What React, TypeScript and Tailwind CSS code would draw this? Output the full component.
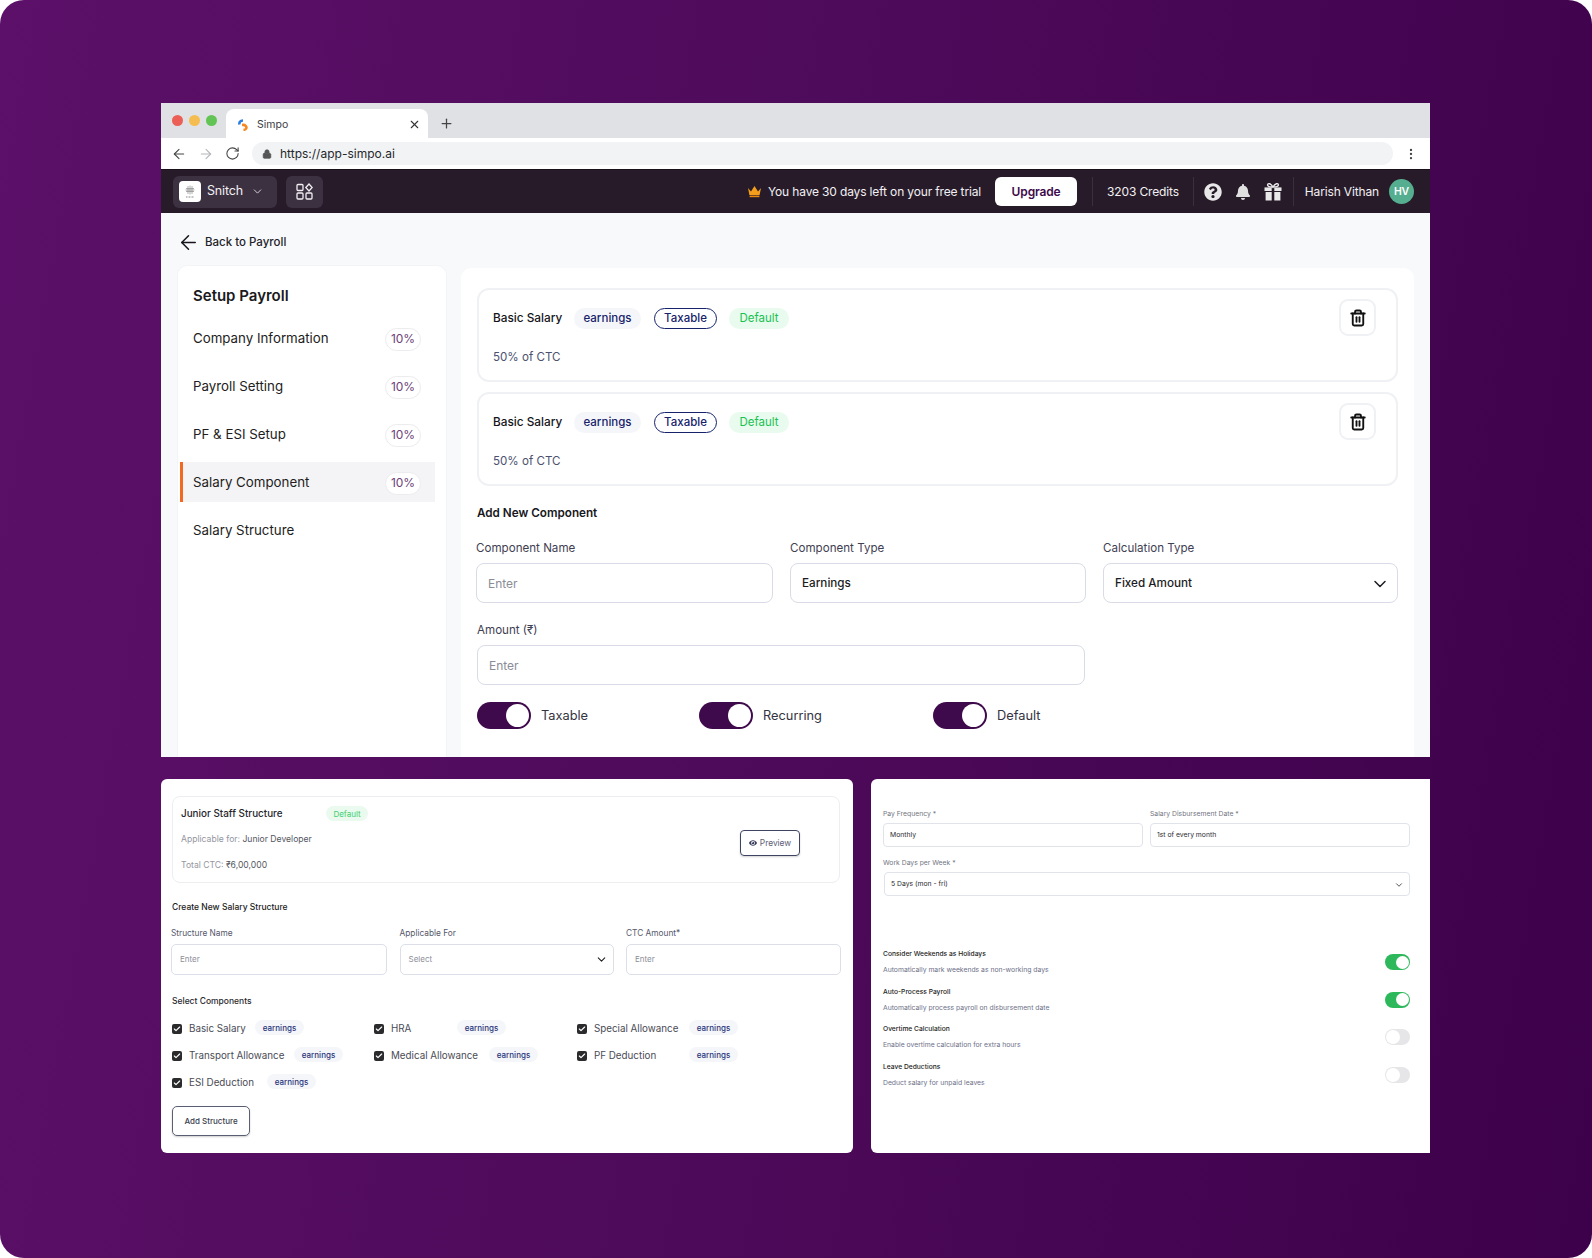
import React from "react";
import { ArrowLeft, ArrowRight, RotateCw, Lock, X, Plus, ChevronDown, Trash2, Check, MoreVertical } from "lucide-react";
import { FaBell, FaQuestionCircle, FaEye } from "react-icons/fa";

function Crown() {
  return (
    <svg width="15" height="13" viewBox="0 0 15 13">
      <path d="M1 3 L4 6.5 L7.5 1 L11 6.5 L14 3 L12.6 10 H2.4 Z" fill="#f59e1b" />
      <rect x="2.6" y="10.6" width="9.8" height="1.6" fill="#e8890c" />
    </svg>
  );
}

function GiftIcon() {
  return (
    <svg width="18" height="19" viewBox="0 0 18 19" className="ml-[13px]">
      <path d="M9 5 C7 1.2 3.6 0.8 3.6 3 C3.6 4.6 6.5 5 9 5 C11.5 5 14.4 4.6 14.4 3 C14.4 0.8 11 1.2 9 5 Z" fill="none" stroke="#e8e8e8" strokeWidth="1.4" />
      <rect x="0.5" y="5.4" width="7.2" height="3.6" fill="#e8e8e8" />
      <rect x="10.3" y="5.4" width="7.2" height="3.6" fill="#e8e8e8" />
      <rect x="1.6" y="10" width="6.1" height="8.5" fill="#e8e8e8" />
      <rect x="10.3" y="10" width="6.1" height="8.5" fill="#e8e8e8" />
    </svg>
  );
}

function AppsIcon() {
  return (
    <svg width="17" height="17" viewBox="0 0 17 17" fill="none" stroke="#f1eff2" strokeWidth="1.3">
      <rect x="1" y="1.5" width="6" height="6" rx="1" />
      <rect x="1" y="10" width="6" height="6" rx="1" />
      <rect x="10" y="10" width="6" height="6" rx="1" />
      <path d="M13 1 L16.2 4.5 L13 8 L9.8 4.5 Z" />
    </svg>
  );
}

function Favicon() {
  return (
    <svg width="10" height="12" viewBox="0 0 10 12" fill="none" strokeWidth="2.6">
      <path d="M5 1.5 C2 1.5 1 3.5 1.5 5.5" stroke="#2a7de1" />
      <path d="M4 6 C7.5 5.5 9 7.5 8.2 9.5 C7.6 10.6 6.5 10.8 5.5 10.8" stroke="#f5881f" />
    </svg>
  );
}

function SnitchMark() {
  return (
    <svg width="12" height="14" viewBox="0 0 12 14" fill="none" stroke="#8a8a8a" strokeWidth="0.7">
      <path d="M4 1 V9 M6 0.5 V9.5 M8 1 V9 M2 3.5 H10 M1.5 5 H10.5 M2 6.5 H10" />
      <path d="M2 12 H10" strokeWidth="1.2" strokeDasharray="1 0.5" />
    </svg>
  );
}

function Pill({ children }: { children: React.ReactNode }) {
  return (
    <span className="mt-[2px] flex h-[23px] w-[36px] items-center justify-center rounded-full border border-[#ececef] bg-white text-[12px] text-[#6d3f78]">
      {children}
    </span>
  );
}

function NavItem({ label, pct, active }: { label: string; pct?: boolean; active?: boolean }) {
  return (
    <div
      className={
        active
          ? "flex h-[40px] items-center justify-between border-l-[3px] border-[#f26a21] bg-[#f4f3f5] pl-[10px] pr-[14px] text-[13.3px] text-[#1d1d22]"
          : "flex h-[40px] items-center justify-between border-l-[3px] border-transparent pl-[10px] pr-[14px] text-[13.3px] text-[#1d1d22]"
      }
    >
      <span className="pt-px">{label}</span>
      {pct && <Pill>10%</Pill>}
    </div>
  );
}

function ComponentCard() {
  return (
    <div className="flex h-[94px] justify-between rounded-[12px] border-2 border-[#f0f1f4] pl-[14px] pr-[20px]">
      <div className="pt-[18px]">
        <div className="flex h-[21px] items-center text-[11.5px]">
          <span className="w-[81px] whitespace-nowrap text-[11.8px] font-medium text-[#15151a]">Basic Salary</span>
          <span className="flex h-[21px] w-[67px] items-center justify-center rounded-full bg-[#f5f6f9] font-medium text-[#16236b]">earnings</span>
          <span className="ml-[13px] flex h-[21px] w-[63px] items-center justify-center rounded-full border-[1.5px] border-[#16236b] font-medium text-[#16236b]">Taxable</span>
          <span className="ml-[12px] flex h-[21px] w-[60px] items-center justify-center rounded-full bg-[#e9faee] text-[#18c252]">Default</span>
        </div>
        <div className="mt-[18px] text-[11.6px] leading-[20px] text-[#4c5170]">50% of CTC</div>
      </div>
      <div className="mt-[9px] flex h-[37px] w-[37px] items-center justify-center rounded-[9px] border-2 border-[#f0f1f4]">
        <Trash2 size={18} strokeWidth={2.5} color="#111" />
      </div>
    </div>
  );
}

function Field({ label, value, placeholder, chevron }: { label: string; value?: string; placeholder?: string; chevron?: boolean }) {
  return (
    <div>
      <div className="h-[20px] text-[11.6px] leading-[21px] text-[#3f4152]">{label}</div>
      <div className="mt-[5px] flex h-[40px] items-center justify-between rounded-[8px] border-[1.5px] border-[#d9dce6] pl-[11px] pr-[7px] pt-px text-[12px]">
        {value ? <span className="text-[11.7px] font-medium text-[#1c1c22]">{value}</span> : <span className="text-[#8a8c97]">{placeholder}</span>}
        {chevron && <ChevronDown size={20} strokeWidth={1.8} color="#1c1c22" />}
      </div>
    </div>
  );
}

function BigToggle({ label, className }: { label: string; className: string }) {
  return (
    <div className={className}>
      <div className="flex h-[27px] w-[54px] items-center justify-end rounded-full bg-[#3e0a4b] pr-[2px]">
        <div className="h-[23px] w-[23px] rounded-full bg-white" />
      </div>
      <span className="text-[12.8px] text-[#33343f]">{label}</span>
    </div>
  );
}

function Earnings({ className }: { className: string }) {
  return <span className={className}>earnings</span>;
}

const checks = [
  { label: "Basic Salary", w: "w-[66px]" },
  { label: "HRA", w: "w-[66px]" },
  { label: "Special Allowance", w: "w-[95px]" },
  { label: "Transport Allowance", w: "w-[105px]" },
  { label: "Medical Allowance", w: "w-[98px]" },
  { label: "PF Deduction", w: "w-[95px]" },
  { label: "ESI Deduction", w: "w-[78px]" },
];

function MiniField({ label, placeholder, chevron }: { label: string; placeholder: string; chevron?: boolean }) {
  return (
    <div>
      <div className="h-[10px] text-[8.3px] leading-[11px] text-[#55586a]">{label}</div>
      <div className="mt-[6px] flex h-[31px] items-center justify-between rounded-[5px] border border-[#dcdfe8] pb-px pl-[8px] pr-[5px] text-[8px] text-[#8d8f9a]">
        <span>{placeholder}</span>
        {chevron && <ChevronDown size={13} strokeWidth={2} color="#222" />}
      </div>
    </div>
  );
}

function SmallToggle({ on }: { on?: boolean }) {
  return on ? (
    <div className="mt-[5px] flex h-[16px] w-[25px] items-center justify-end rounded-full bg-[#2eb85c] pr-px">
      <div className="h-[13px] w-[13px] rounded-full bg-white" />
    </div>
  ) : (
    <div className="mt-[5px] flex h-[16px] w-[25px] items-center rounded-full bg-[#e6e6e8] pl-px">
      <div className="h-[14px] w-[14px] rounded-full bg-white" />
    </div>
  );
}

const settings = [
  { t: "Consider Weekends as Holidays", s: "Automatically mark weekends as non-working days", on: true },
  { t: "Auto-Process Payroll", s: "Automatically process payroll on disbursement date", on: true },
  { t: "Overtime Calculation", s: "Enable overtime calculation for extra hours", on: false },
  { t: "Leave Deductions", s: "Deduct salary for unpaid leaves", on: false },
];

export default function App() {
  return (
    <div className="h-[1258px] w-[1592px] overflow-hidden bg-white font-['Inter',sans-serif]">
      <div className="flex h-full w-full flex-col rounded-[24px] bg-[linear-gradient(100deg,#5c1069_0%,#4d0a5a_50%,#3d004a_100%)] pl-[161px] pt-[103px]">
        {/* Window */}
        <div className="flex h-[654px] w-[1269px] flex-col overflow-hidden">
          <div className="flex h-[35px] shrink-0 items-center bg-[#dfe1e5] pl-[11px]">
            <div className="flex gap-[6px]">
              <span className="h-[11px] w-[11px] rounded-full bg-[#ec5f57]" />
              <span className="h-[11px] w-[11px] rounded-full bg-[#f5bd4f]" />
              <span className="h-[11px] w-[11px] rounded-full bg-[#62c454]" />
            </div>
            <div className="ml-[9px] flex h-[29px] w-[202px] items-center self-end rounded-t-[8px] bg-white pl-[12px] pr-[7px] pt-[2px]">
              <Favicon />
              <span className="ml-[9px] text-[10.5px] text-[#3c4043]">Simpo</span>
              <X size={13} strokeWidth={2} color="#333" className="ml-auto" />
            </div>
            <Plus size={15} strokeWidth={2} color="#444" className="ml-[11px] mt-[6px]" />
          </div>
          <div className="flex h-[31px] shrink-0 items-center bg-white pl-[10px]">
            <ArrowLeft size={16} strokeWidth={1.6} color="#444" />
            <ArrowRight size={16} strokeWidth={1.6} color="#b4b6ba" className="ml-[11px]" />
            <RotateCw size={15} strokeWidth={1.7} color="#444" className="ml-[11px]" />
            <div className="ml-[12px] flex h-[23px] flex-1 items-center rounded-full bg-[#f1f3f4] pl-[10px]">
              <Lock size={10} fill="#555" color="#555" strokeWidth={2} />
              <span className="ml-[8px] text-[12px] text-[#26282c]">https://app-simpo.ai</span>
            </div>
            <MoreVertical size={14} strokeWidth={2} color="#444" className="ml-[11px] mr-[12px]" />
          </div>
          <div className="flex h-[44px] shrink-0 items-center border-t border-[#1a111b] bg-[#271b29] pl-[12px] pr-[16px] text-[12px] tracking-[-0.15px] text-[#f2f0f3]">
            <div className="flex h-[32px] w-[104px] items-center rounded-[6px] bg-[#3c3140] pl-[6px]">
              <div className="flex h-[21px] w-[22px] items-center justify-center rounded-[4px] bg-white">
                <SnitchMark />
              </div>
              <span className="ml-[6px] text-[12.5px]">Snitch</span>
              <ChevronDown size={13} strokeWidth={1.6} color="#e8e6ea" className="ml-[8px]" />
            </div>
            <div className="ml-[9px] flex h-[32px] w-[37px] items-center justify-center rounded-[6px] bg-[#3c3140]">
              <AppsIcon />
            </div>
            <div className="ml-auto flex items-center">
              <Crown />
              <span className="ml-[6px] whitespace-nowrap">You have 30 days left on your free trial</span>
              <div className="ml-[14px] flex h-[29px] w-[82px] items-center justify-center rounded-[6px] bg-white font-semibold text-[#3e0a4b]">Upgrade</div>
              <div className="ml-[15px] h-[29px] w-px bg-[#3a2f3c]" />
              <span className="ml-[14px] whitespace-nowrap">3203 Credits</span>
              <div className="ml-[14px] h-[29px] w-px bg-[#3a2f3c]" />
              <FaQuestionCircle size={18} color="#e8e8e8" className="ml-[10px]" />
              <FaBell size={16} color="#e0e0e0" className="ml-[13px]" />
              <GiftIcon />
              <div className="ml-[11px] h-[29px] w-px bg-[#3a2f3c]" />
              <span className="ml-[11px] whitespace-nowrap">Harish Vithan</span>
              <div className="ml-[10px] flex h-[25px] w-[25px] items-center justify-center rounded-full bg-[#55ae8f] text-[10.5px] font-semibold text-white">HV</div>
            </div>
          </div>
          <div className="flex min-h-0 flex-1 flex-col bg-[#f8f9fb] pl-[16px] pr-[16px]">
            <div className="mt-[19px] flex h-[20px] shrink-0 items-center text-[11.5px] font-medium text-[#23232a]">
              <ArrowLeft size={23} strokeWidth={1.6} color="#16161c" />
              <span className="ml-[5px] pt-[2px]">Back to Payroll</span>
            </div>
            <div className="mt-[13px] flex min-h-0 flex-1 gap-[14px]">
              <div className="w-[270px] shrink-0 rounded-t-[10px] border border-b-0 border-[#f3f4f6] bg-white pl-[2px] pr-[11px] pt-[20px]">
                <div className="pl-[13px] text-[15px] font-semibold leading-[20px] text-[#1a1a20]">Setup Payroll</div>
                <div className="mt-[12px] flex flex-col gap-[8px]">
                  <NavItem label="Company Information" pct />
                  <NavItem label="Payroll Setting" pct />
                  <NavItem label="PF & ESI Setup" pct />
                  <NavItem label="Salary Component" pct active />
                  <NavItem label="Salary Structure" />
                </div>
              </div>
              <div className="mt-[3px] min-w-0 flex-1 rounded-t-[10px] bg-white px-[16px] pt-[20px]">
                <ComponentCard />
                <div className="mt-[10px]">
                  <ComponentCard />
                </div>
                <div className="mt-[17px] text-[11.7px] font-semibold leading-[20px] text-[#17171d]">Add New Component</div>
                <div className="-ml-px mt-[15px] grid grid-cols-[297px_296px_295px] gap-x-[17px]">
                  <Field label="Component Name" placeholder="Enter" />
                  <Field label="Component Type" value="Earnings" />
                  <Field label="Calculation Type" value="Fixed Amount" chevron />
                </div>
                <div className="mt-[17px] w-[608px]">
                  <Field label="Amount (₹)" placeholder="Enter" />
                </div>
                <div className="mt-[17px] flex">
                  <BigToggle label="Taxable" className="flex w-[222px] items-center gap-[10px]" />
                  <BigToggle label="Recurring" className="flex w-[234px] items-center gap-[10px]" />
                  <BigToggle label="Default" className="flex items-center gap-[10px]" />
                </div>
              </div>
            </div>
          </div>
        </div>

        {/* Bottom */}
        <div className="mt-[22px] flex w-[1269px] gap-[18px]">
          <div className="h-[374px] w-[692px] rounded-[6px] bg-white pl-[11px] pr-[13px] pt-[17px]">
            <div className="flex h-[87px] justify-between rounded-[8px] border border-[#eceef2] pl-[8px] pr-[39px]">
              <div className="pt-[9px]">
                <div className="flex h-[15px] items-center">
                  <span className="w-[145px] text-[9.9px] font-medium text-[#26262c]">Junior Staff Structure</span>
                  <span className="flex h-[15px] w-[42px] items-center justify-center rounded-full bg-[#eafaef] text-[8px] text-[#3ccf6e]">Default</span>
                </div>
                <div className="mt-[12px] text-[8.6px] leading-[12px] text-[#94969f]">
                  Applicable for: <span className="text-[#55575f]">Junior Developer</span>
                </div>
                <div className="mt-[14px] text-[8.6px] leading-[12px] text-[#94969f]">
                  Total CTC: <span className="text-[#55575f]">₹6,00,000</span>
                </div>
              </div>
              <div className="mt-[33px] flex h-[26px] w-[60px] items-center justify-center gap-[3px] rounded-[4px] border border-[#3f4462] text-[8.4px] text-[#5b5e75] shadow-[0_1px_2px_rgba(0,0,0,0.18)]">
                <FaEye size={8} color="#3b3f5c" />
                Preview
              </div>
            </div>
            <div className="mt-[18px] text-[8.5px] font-medium leading-[12px] text-[#1d1d22]">Create New Salary Structure</div>
            <div className="-ml-px mt-[15px] grid grid-cols-[216px_214px_215px] gap-x-[12.5px]">
              <MiniField label="Structure Name" placeholder="Enter" />
              <MiniField label="Applicable For" placeholder="Select" chevron />
              <MiniField label="CTC Amount*" placeholder="Enter" />
            </div>
            <div className="mt-[20px] text-[8.5px] font-medium leading-[12px] text-[#2a2a30]">Select Components</div>
            <div className="mt-[14px] grid grid-cols-[202px_203px_1fr] gap-y-[12px]">
              {checks.map((c) => (
                <div key={c.label} className="flex h-[15px] items-center">
                  <span className="flex h-[10px] w-[10px] items-center justify-center rounded-[2px] bg-[#2b2b2e]">
                    <Check size={8} strokeWidth={3.5} color="#fff" />
                  </span>
                  <span className={`ml-[7px] whitespace-nowrap pt-px text-[9.8px] text-[#4a4b55] ${c.w}`}>{c.label}</span>
                  <Earnings className="flex h-[15px] w-[49px] -translate-y-px items-center justify-center rounded-full bg-[#f5f6f9] text-[8px] font-medium text-[#28327a]" />
                </div>
              ))}
            </div>
            <div className="mt-[16px] flex h-[30px] w-[78px] items-center justify-center rounded-[5px] border border-[#5a5e72] text-[8px] font-medium text-[#3a3d4d] shadow-[0_1px_2px_rgba(0,0,0,0.2)]">
              Add Structure
            </div>
          </div>

          <div className="h-[374px] w-[559px] rounded-l-[6px] bg-white pl-[12px] pr-[20px] pt-[30px]">
            <div className="grid grid-cols-[260px_1fr] gap-x-[7px]">
              <div>
                <div className="h-[10px] text-[6.8px] leading-[10px] text-[#73757f]">Pay Frequency *</div>
                <div className="mt-[4px] flex h-[24px] items-center rounded-[4px] border border-[#e0e3ea] pl-[6px] pt-px text-[6.8px] text-[#2a2a30]">Monthly</div>
              </div>
              <div>
                <div className="h-[10px] text-[6.8px] leading-[10px] text-[#73757f]">Salary Disbursement Date *</div>
                <div className="mt-[4px] flex h-[24px] items-center rounded-[4px] border border-[#e0e3ea] pl-[6px] pt-px text-[6.8px] text-[#2a2a30]">1st of every month</div>
              </div>
            </div>
            <div className="mt-[11px] h-[10px] text-[6.8px] leading-[10px] text-[#73757f]">Work Days per Week *</div>
            <div className="ml-px mt-[4px] flex h-[24px] items-center justify-between rounded-[4px] border border-[#e0e3ea] pl-[6px] pr-[5px] pt-px text-[6.8px] text-[#2a2a30]">
              <span>5 Days (mon - fri)</span>
              <ChevronDown size={10} strokeWidth={2} color="#333" />
            </div>
            <div className="mt-[53px] flex flex-col gap-[11.5px]">
              {settings.map((r) => (
                <div key={r.t} className="flex h-[26px] justify-between">
                  <div>
                    <div className="h-[10px] text-[6.7px] font-medium leading-[10px] text-[#1d1d22]">{r.t}</div>
                    <div className="mt-[6px] h-[10px] text-[6.8px] leading-[10px] text-[#6d7088]">{r.s}</div>
                  </div>
                  <SmallToggle on={r.on} />
                </div>
              ))}
            </div>
          </div>
        </div>
      </div>
    </div>
  );
}
